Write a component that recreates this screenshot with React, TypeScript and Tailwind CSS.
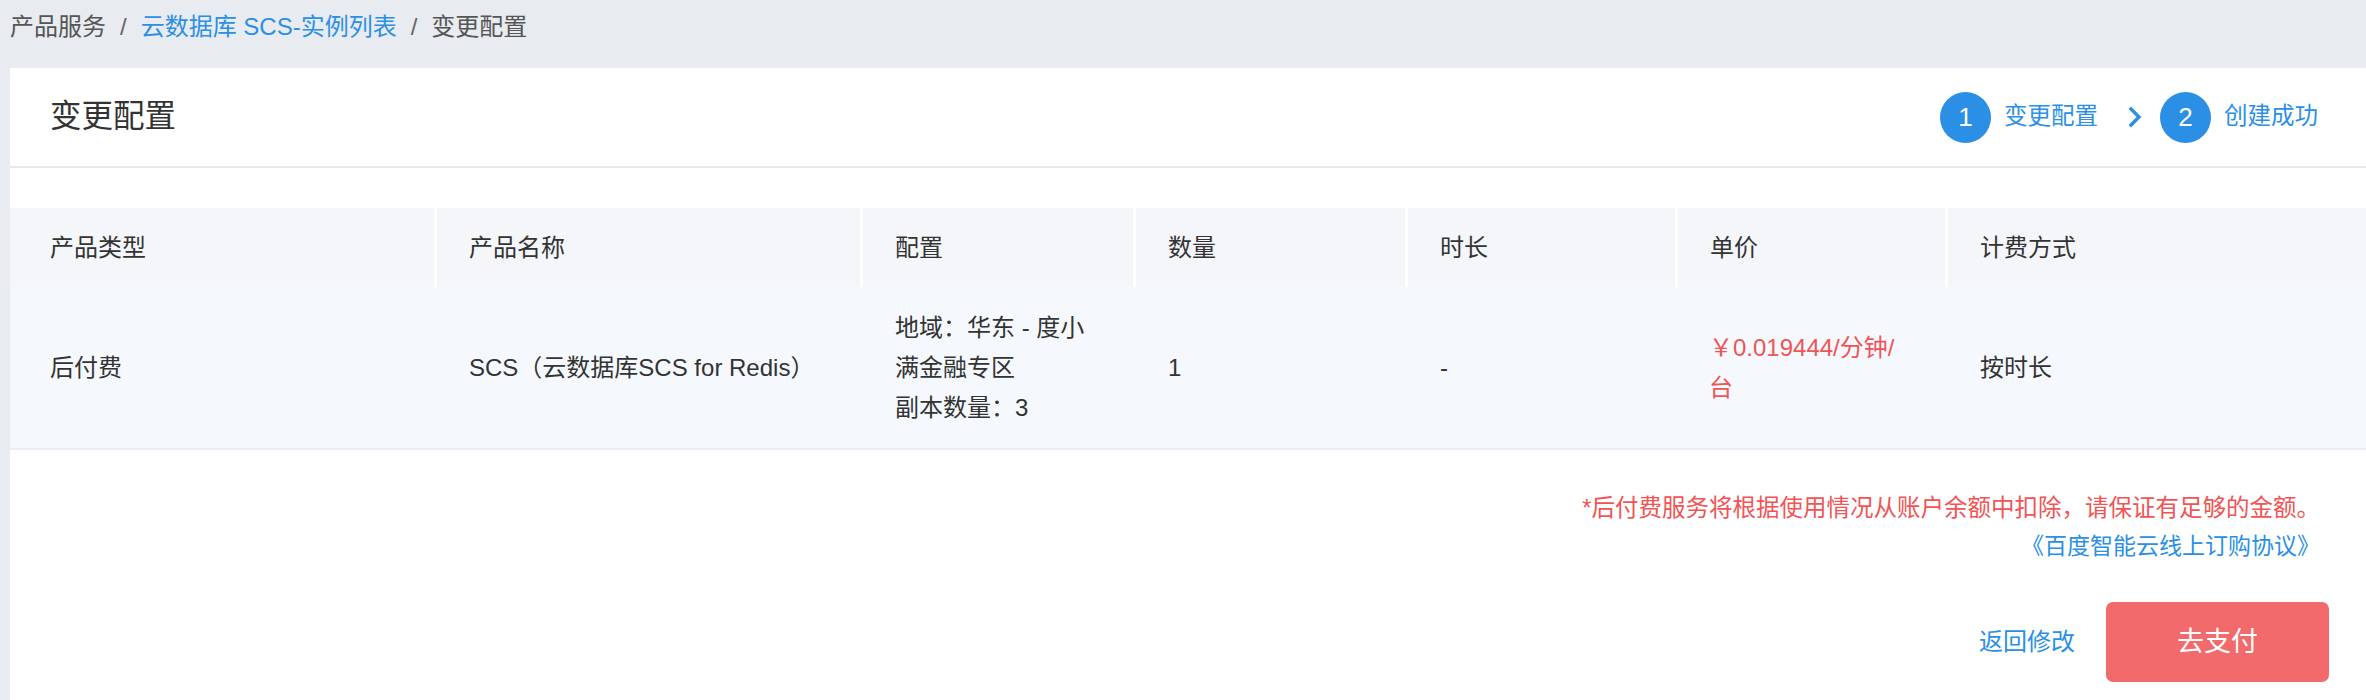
import React from 'react';

const FONT = "font-['Liberation_Sans','Noto_Sans_CJK_SC',sans-serif]";

const COLS = [
  { head: '产品类型', first: true },
  { head: '产品名称' },
  { head: '配置' },
  { head: '数量' },
  { head: '时长' },
  { head: '单价' },
  { head: '计费方式' },
];

const GRID = 'grid grid-cols-[424px_426px_273px_272px_270px_270px_1fr]';

const Steps: React.FC = () => (
  <div className="flex items-center pr-[48px]">
    <div className="flex h-[51px] w-[51px] items-center justify-center rounded-full bg-[#2b8fe6] text-[26px] text-white">1</div>
    <span className="ml-[13px] text-[23.5px] text-[#2b8fe6]">变更配置</span>
    <svg className="ml-[30px] h-[22px] w-[14px]" viewBox="0 0 14 22" fill="none">
      <polyline points="3,3 11,11 3,19" stroke="#2b8fe6" strokeWidth="3.4" strokeLinecap="square" />
    </svg>
    <div className="ml-[18px] flex h-[51px] w-[51px] items-center justify-center rounded-full bg-[#2b8fe6] text-[26px] text-white">2</div>
    <span className="ml-[13px] text-[23.5px] text-[#2b8fe6]">创建成功</span>
  </div>
);

export default function App() {
  return (
    <div className={`${FONT} min-h-[700px] bg-[#e8ebef] text-[#333]`}>
      <div className="flex h-[68px] items-center pb-[14px] pl-[10px] text-[24px] leading-none">
        <span className="text-[#555]">产品服务</span>
        <span className="mx-[14px] text-[#666]">/</span>
        <span className="text-[#2b8fe6]">云数据库 SCS-实例列表</span>
        <span className="mx-[14px] text-[#666]">/</span>
        <span className="text-[#555]">变更配置</span>
      </div>

      <div className="ml-[10px] min-h-[632px] bg-white">
        <div className="flex h-[100px] items-center justify-between border-b-2 border-[#e6e8ec] pl-[40px]">
          <h1 className="text-[31.5px] font-normal text-[#333]">变更配置</h1>
          <Steps />
        </div>

        <div className="mt-[40px]">
          <div className={`${GRID} h-[79px] bg-[#f4f6f9] text-[24px]`}>
            {COLS.map((c) => (
              <div
                key={c.head}
                className={`flex items-center ${c.first ? 'pl-[40px]' : 'border-l-[3px] border-white pl-[32px]'}`}
              >
                {c.head}
              </div>
            ))}
          </div>
          <div className={`${GRID} h-[163px] border-b-2 border-[#e9edf5] bg-[#f5f9fe] text-[24px] leading-[40px]`}>
            <div className="flex items-center pl-[40px]">后付费</div>
            <div className="flex items-center border-l-[3px] border-transparent pl-[32px]">SCS（云数据库SCS for Redis）</div>
            <div className="flex items-center border-l-[3px] border-transparent pl-[32px] pr-[32px]">
              <div>
                <div>地域：华东 - 度小满金融专区</div>
                <div>副本数量：3</div>
              </div>
            </div>
            <div className="flex items-center border-l-[3px] border-transparent pl-[32px]">1</div>
            <div className="flex items-center border-l-[3px] border-transparent pl-[32px]">-</div>
            <div className="flex items-center border-l-[3px] border-transparent pl-[31px] pr-[32px] text-[#f05454]">
              ￥0.019444/分钟/台
            </div>
            <div className="flex items-center border-l-[3px] border-transparent pl-[32px]">按时长</div>
          </div>
        </div>

        <div className="mt-[39px] flex flex-col items-end pr-[46px] leading-[38px]">
          <p className="text-[23.5px] text-[#f05454]">*后付费服务将根据使用情况从账户余额中扣除，请保证有足够的金额。</p>
          <a className="text-[23px] text-[#2b8fe6]">《百度智能云线上订购协议》</a>
        </div>

        <div className="mt-[37px] flex items-center justify-end pr-[37px]">
          <button type="button" className="text-[24px] text-[#2b8fe6]">返回修改</button>
          <button
            type="button"
            className="ml-[31px] h-[80px] w-[223px] rounded-[7px] bg-[#f26a6c] text-[27px] text-white"
          >
            去支付
          </button>
        </div>
      </div>
    </div>
  );
}
